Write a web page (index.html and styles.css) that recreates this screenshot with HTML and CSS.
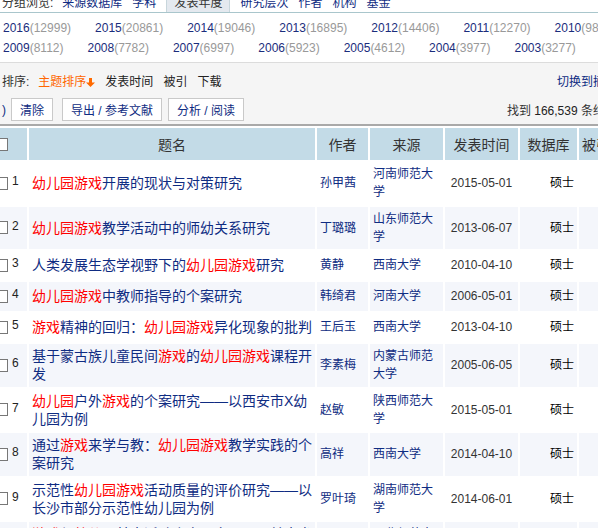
FILE: index.html
```html
<!DOCTYPE html>
<html lang="zh-CN">
<head>
    <meta charset="UTF-8">
    <meta name="viewport" content="width=device-width, initial-scale=1.0">
    <title>检索结果 - 幼儿园游戏</title>
    <link rel="stylesheet" href="styles.css">
</head>
<body>
<div class="page">
    <div class="group-tabs">
        <span class="group-label">分组浏览:</span>
        <a class="group-tab" href="#">来源数据库</a>
        <a class="group-tab" href="#">学科</a>
        <a class="group-tab current" href="#">发表年度</a>
        <a class="group-tab" href="#">研究层次</a>
        <a class="group-tab" href="#">作者</a>
        <a class="group-tab" href="#">机构</a>
        <a class="group-tab" href="#">基金</a>
    </div>

    <div class="years">
        <div class="year-row">
            <a class="year" href="#">2016<span class="count">(12999)</span></a>
            <a class="year" href="#">2015<span class="count">(20861)</span></a>
            <a class="year" href="#">2014<span class="count">(19046)</span></a>
            <a class="year" href="#">2013<span class="count">(16895)</span></a>
            <a class="year" href="#">2012<span class="count">(14406)</span></a>
            <a class="year" href="#">2011<span class="count">(12270)</span></a>
            <a class="year" href="#">2010<span class="count">(9836)</span></a>
        </div>
        <div class="year-row">
            <a class="year" href="#">2009<span class="count">(8112)</span></a>
            <a class="year" href="#">2008<span class="count">(7782)</span></a>
            <a class="year" href="#">2007<span class="count">(6997)</span></a>
            <a class="year" href="#">2006<span class="count">(5923)</span></a>
            <a class="year" href="#">2005<span class="count">(4612)</span></a>
            <a class="year" href="#">2004<span class="count">(3977)</span></a>
            <a class="year" href="#">2003<span class="count">(3277)</span></a>
        </div>
    </div>

    <div class="toolbar">
        <div class="sort-row">
            <span class="sort-label">排序:</span>
            <a class="sort-item active" href="#">主题排序<svg width="9" height="9" viewBox="0 0 9 9"><path d="M3 0h3v4.5h3L4.5 9 0 4.5h3z" fill="#ff6a00"/></svg></a>
            <a class="sort-item" href="#">发表时间</a>
            <a class="sort-item" href="#">被引</a>
            <a class="sort-item" href="#">下载</a>
            <a class="switch-view" href="#">切换到摘要</a>
        </div>
        <div class="action-row">
            <span class="selected-tail">)</span>
            <button class="btn btn-clear">清除</button>
            <button class="btn">导出 / 参考文献</button>
            <button class="btn">分析 / 阅读</button>
            <span class="result-count">找到 <b>166,539</b> 条结果</span>
        </div>
    </div>

    <table class="results">
        <colgroup>
            <col class="col-check">
            <col class="col-title">
            <col class="col-author">
            <col class="col-source">
            <col class="col-date">
            <col class="col-db">
            <col class="col-cite">
            <col class="col-down">
            <col class="col-read">
        </colgroup>
        <thead>
            <tr>
                <th class="th-check"><span class="check-box"></span></th>
                <th>题名</th>
                <th>作者</th>
                <th>来源</th>
                <th>发表时间</th>
                <th>数据库</th>
                <th class="th-left">被引</th>
                <th>下载</th>
                <th>阅读</th>
            </tr>
        </thead>
        <tbody>
            <tr>
                <td><div class="check"><span class="check-box"></span><span class="row-num">1</span></div></td>
                <td class="cell-title"><a href="#"><span class="hl">幼儿园游戏</span>开展的现状与对策研究</a></td>
                <td><a href="#">孙甲茜</a></td>
                <td><a href="#">河南师范大学</a></td>
                <td class="cell-date">2015-05-01</td>
                <td class="cell-db">硕士</td>
                <td></td><td></td><td></td>
            </tr>
            <tr>
                <td><div class="check"><span class="check-box"></span><span class="row-num">2</span></div></td>
                <td class="cell-title"><a href="#"><span class="hl">幼儿园游戏</span>教学活动中的师幼关系研究</a></td>
                <td><a href="#">丁璐璐</a></td>
                <td><a href="#">山东师范大学</a></td>
                <td class="cell-date">2013-06-07</td>
                <td class="cell-db">硕士</td>
                <td></td><td></td><td></td>
            </tr>
            <tr>
                <td><div class="check"><span class="check-box"></span><span class="row-num">3</span></div></td>
                <td class="cell-title"><a href="#">人类发展生态学视野下的<span class="hl">幼儿园游戏</span>研究</a></td>
                <td><a href="#">黄静</a></td>
                <td><a href="#">西南大学</a></td>
                <td class="cell-date">2010-04-10</td>
                <td class="cell-db">硕士</td>
                <td></td><td></td><td></td>
            </tr>
            <tr>
                <td><div class="check"><span class="check-box"></span><span class="row-num">4</span></div></td>
                <td class="cell-title"><a href="#"><span class="hl">幼儿园游戏</span>中教师指导的个案研究</a></td>
                <td><a href="#">韩绮君</a></td>
                <td><a href="#">河南大学</a></td>
                <td class="cell-date">2006-05-01</td>
                <td class="cell-db">硕士</td>
                <td></td><td></td><td></td>
            </tr>
            <tr>
                <td><div class="check"><span class="check-box"></span><span class="row-num">5</span></div></td>
                <td class="cell-title"><a href="#"><span class="hl">游戏</span>精神的回归：<span class="hl">幼儿园游戏</span>异化现象的批判</a></td>
                <td><a href="#">王后玉</a></td>
                <td><a href="#">西南大学</a></td>
                <td class="cell-date">2013-04-10</td>
                <td class="cell-db">硕士</td>
                <td></td><td></td><td></td>
            </tr>
            <tr>
                <td><div class="check"><span class="check-box"></span><span class="row-num">6</span></div></td>
                <td class="cell-title"><a href="#">基于蒙古族儿童民间<span class="hl">游戏</span>的<span class="hl">幼儿园游戏</span>课程开发</a></td>
                <td><a href="#">李素梅</a></td>
                <td><a href="#">内蒙古师范大学</a></td>
                <td class="cell-date">2005-06-05</td>
                <td class="cell-db">硕士</td>
                <td></td><td></td><td></td>
            </tr>
            <tr>
                <td><div class="check"><span class="check-box"></span><span class="row-num">7</span></div></td>
                <td class="cell-title"><a href="#"><span class="hl">幼儿园</span>户外<span class="hl">游戏</span>的个案研究——以西安市X幼儿园为例</a></td>
                <td><a href="#">赵敏</a></td>
                <td><a href="#">陕西师范大学</a></td>
                <td class="cell-date">2015-05-01</td>
                <td class="cell-db">硕士</td>
                <td></td><td></td><td></td>
            </tr>
            <tr>
                <td><div class="check"><span class="check-box"></span><span class="row-num">8</span></div></td>
                <td class="cell-title"><a href="#">通过<span class="hl">游戏</span>来学与教：<span class="hl">幼儿园游戏</span>教学实践的个案研究</a></td>
                <td><a href="#">高祥</a></td>
                <td><a href="#">西南大学</a></td>
                <td class="cell-date">2014-04-10</td>
                <td class="cell-db">硕士</td>
                <td></td><td></td><td></td>
            </tr>
            <tr>
                <td><div class="check"><span class="check-box"></span><span class="row-num">9</span></div></td>
                <td class="cell-title"><a href="#">示范性<span class="hl">幼儿园游戏</span>活动质量的评价研究——以长沙市部分示范性幼儿园为例</a></td>
                <td><a href="#">罗叶琦</a></td>
                <td><a href="#">湖南师范大学</a></td>
                <td class="cell-date">2014-06-01</td>
                <td class="cell-db">硕士</td>
                <td></td><td></td><td></td>
            </tr>
            <tr>
                <td><div class="check"><span class="check-box"></span><span class="row-num">10</span></div></td>
                <td class="cell-title"><a href="#"><span class="hl">游戏</span>与<span class="hl">幼儿园</span>基本活动个案研究——以甘肃省临夏市为例</a></td>
                <td><a href="#">马小芳</a></td>
                <td><a href="#">西北师范大学</a></td>
                <td class="cell-date">2014-05-01</td>
                <td class="cell-db">硕士</td>
                <td></td><td></td><td></td>
            </tr>
        </tbody>
    </table>
</div>
</body>
</html>
```

FILE: styles.css
```css
html, body {
    margin: 0;
    overflow: hidden;
    background-color: #fff;
}

body {
    font-family: "Liberation Sans", "Noto Sans CJK SC", sans-serif;
    font-size: 12px;
    color: #333;
}

a {
    color: #0f2c82;
    text-decoration: none;
}

.page {
    width: 620px;
}

/* group tabs, scrolled half out of view */
.group-tabs {
    display: flex;
    height: 18px;
    line-height: 18px;
    margin-top: -6px;
    padding-left: 2px;
    border-bottom: 1px solid #a9c6cc;
    white-space: nowrap;
}

.group-label {
    margin-right: 9px;
    color: #333;
}

.group-tab {
    margin-right: 10px;
}

.group-tab.current {
    padding: 0 7px;
    background-color: #e4e9ef;
    border-left: 1px solid #c8d6dc;
    border-right: 1px solid #c8d6dc;
    color: #333;
}

/* years */
.years {
    padding: 5px 0 4px 3px;
    line-height: 20px;
    border-bottom: 1px solid #dcdcdc;
}

.year-row {
    display: flex;
    white-space: nowrap;
}

.year {
    margin-right: 24px;
    color: #1a2d7c;
}

.year .count {
    color: #999;
}

/* sort + actions */
.toolbar {
    background-color: #f5f5f5;
    padding: 5px 3px 3px 2px;
    border-bottom: 2px solid #a9a9a9;
}

.sort-row {
    display: flex;
    align-items: center;
    height: 24px;
}

.sort-label {
    margin-right: 9px;
    color: #333;
}

.sort-item {
    margin-right: 10px;
    color: #222;
}

.sort-item.active {
    color: #ff6600;
}

.sort-item svg {
    vertical-align: -1px;
}

.switch-view {
    margin-left: auto;
}

.action-row {
    display: flex;
    align-items: center;
    height: 23px;
    margin-top: 6px;
}

.selected-tail {
    color: #0f2c82;
}

.btn {
    height: 23px;
    padding: 0 8px;
    margin-left: 6px;
    border: 1px solid #c9c9c9;
    background-color: #fff;
    color: #0f2c82;
    font: inherit;
}

.btn-clear {
    margin-left: 5px;
    margin-right: 3px;
}

.result-count {
    margin-left: auto;
    color: #333;
}

.result-count b {
    font-weight: normal;
    color: #222;
}

/* results table */
.results {
    border-collapse: separate;
    border-spacing: 2px;
    table-layout: fixed;
    width: 709px;
    margin-left: -10px;
}

.col-check { width: 35px; }
.col-title { width: 286px; }
.col-author { width: 51px; }
.col-source { width: 73px; }
.col-date { width: 73px; }
.col-db { width: 57px; }
.col-cite { width: 34px; }
.col-down { width: 40px; }
.col-read { width: 40px; }

.results thead tr {
    height: 32px;
}

.results th {
    padding: 0 3px;
    background-color: #c3dbe7;
    font-size: 14px;
    font-weight: normal;
    color: #333;
    text-align: center;
    white-space: nowrap;
}

.results .th-check,
.results .th-left {
    text-align: left;
}

.th-check .check-box {
    display: block;
}

.results tbody tr {
    height: 29px;
}

.results td {
    padding: 3px 3px 3.5px;
    line-height: 18px;
    vertical-align: middle;
}

.results tbody tr:nth-child(even) td {
    background-color: #f4f6fb;
}

.check {
    display: flex;
    align-items: center;
}

.check-box {
    width: 11px;
    height: 11px;
    border: 1px solid #777;
    background-color: #fff;
    margin-right: 4px;
}

.row-num {
    margin-bottom: 4px;
    color: #222;
}

.cell-title {
    font-size: 14px;
}

.hl {
    color: #ff0000;
}

.cell-date {
    text-align: center;
    color: #333;
}

.cell-db {
    text-align: right;
    color: #000;
}
```
